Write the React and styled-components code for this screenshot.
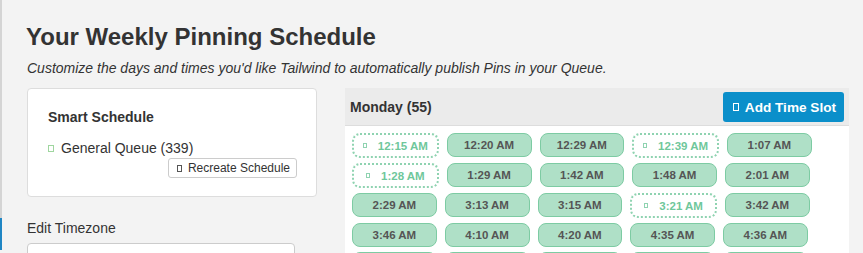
import React from 'react';
import styled, { createGlobalStyle } from 'styled-components';

const slots = [
  { time: '12:15 AM', pending: true },
  { time: '12:20 AM' },
  { time: '12:29 AM' },
  { time: '12:39 AM', pending: true },
  { time: '1:07 AM' },
  { time: '1:28 AM', pending: true },
  { time: '1:29 AM' },
  { time: '1:42 AM' },
  { time: '1:48 AM' },
  { time: '2:01 AM' },
  { time: '2:29 AM' },
  { time: '3:13 AM' },
  { time: '3:15 AM' },
  { time: '3:21 AM', pending: true },
  { time: '3:42 AM' },
  { time: '3:46 AM' },
  { time: '4:10 AM' },
  { time: '4:20 AM' },
  { time: '4:35 AM' },
  { time: '4:36 AM' },
  { time: '5:02 AM' },
  { time: '5:14 AM' },
  { time: '5:30 AM' },
  { time: '5:41 AM' },
  { time: '6:05 AM' },
];

function App() {
  return (
    <>
      <GlobalStyle />
      <StyledPage>
        <StyledEdge>
          <span />
          <span className='active' />
        </StyledEdge>
        <StyledMain>
          <StyledTitle>Your Weekly Pinning Schedule</StyledTitle>
          <StyledSubtitle>
            Customize the days and times you'd like Tailwind to automatically publish Pins in your Queue.
          </StyledSubtitle>
          <StyledColumns>
            <StyledSidebar>
              <StyledCard>
                <h3>Smart Schedule</h3>
                <StyledQueue>
                  <StyledGlyph $w={6} $h={7} $color='#9fd69f' $gap={7} />
                  General Queue (339)
                </StyledQueue>
                <StyledActions>
                  <StyledSmallButton>
                    <StyledGlyph $w={5} $h={7} $color='#555' $gap={6} />
                    Recreate Schedule
                  </StyledSmallButton>
                </StyledActions>
              </StyledCard>
              <StyledLabel>Edit Timezone</StyledLabel>
              <StyledInput />
            </StyledSidebar>
            <StyledPanel>
              <StyledPanelHeader>
                <h4>Monday (55)</h4>
                <StyledAddButton>
                  <StyledGlyph $w={6} $h={8} $color='#fff' $gap={6} />
                  Add Time Slot
                </StyledAddButton>
              </StyledPanelHeader>
              <StyledSlots>
                {slots.map((slot) => (
                  <StyledSlot key={slot.time} $pending={slot.pending}>
                    {slot.pending && <StyledGlyph $w={4} $h={5} $color='#8fd3b1' $gap={11} />}
                    {slot.time}
                  </StyledSlot>
                ))}
              </StyledSlots>
            </StyledPanel>
          </StyledColumns>
        </StyledMain>
      </StyledPage>
    </>
  );
}

const GlobalStyle = createGlobalStyle`
  body {
    margin: 0;
    background: #f3f3f3;
    font-family: "Liberation Sans", Arial, sans-serif;
    color: #333;
  }
`;

const StyledPage = styled.div`
  display: flex;
  height: 253px;
  overflow: hidden;
`;

const StyledEdge = styled.div`
  width: 2px;
  display: flex;
  flex-direction: column;
  span {
    height: 218px;
    background: #d4d4d4;
  }
  .active {
    height: 32px;
    background: #1f86c4;
  }
`;

const StyledMain = styled.div`
  flex: 1;
  padding-left: 25px;
`;

const StyledTitle = styled.h1`
  margin: 23px 0 0 -1px;
  font-size: 24px;
  line-height: 28px;
  font-weight: bold;
  color: #333;
`;

const StyledSubtitle = styled.p`
  margin: 7px 0 0 0;
  font-size: 14px;
  line-height: 20px;
  font-style: italic;
`;

const StyledColumns = styled.div`
  display: flex;
  gap: 28px;
  margin-top: 10px;
  align-items: flex-start;
`;

const StyledSidebar = styled.div`
  width: 290px;
`;

const StyledCard = styled.div`
  background: #fff;
  border: 1px solid #ddd;
  border-radius: 4px;
  padding: 20px 19px 18px 20px;
  h3 {
    margin: 0;
    font-size: 14px;
    line-height: 17px;
  }
`;

const StyledQueue = styled.div`
  margin-top: 12px;
  font-size: 14px;
  line-height: 20px;
  display: flex;
  align-items: center;
`;

const StyledGlyph = styled.span`
  display: inline-block;
  flex: none;
  box-sizing: border-box;
  width: ${(p) => p.$w}px;
  height: ${(p) => p.$h}px;
  border: 1px solid ${(p) => p.$color};
  margin-right: ${(p) => p.$gap}px;
`;

const StyledActions = styled.div`
  display: flex;
  justify-content: flex-end;
`;

const StyledSmallButton = styled.button`
  display: flex;
  align-items: center;
  box-sizing: border-box;
  height: 20px;
  padding: 0 6px 0 8px;
  background: #fff;
  border: 1px solid #ccc;
  border-radius: 3px;
  font-family: inherit;
  font-size: 12px;
  color: #333;
`;

const StyledLabel = styled.div`
  margin-top: 21px;
  font-size: 14px;
  line-height: 20px;
`;

const StyledInput = styled.div`
  margin-top: 5px;
  width: 268px;
  height: 34px;
  box-sizing: border-box;
  background: #fff;
  border: 1px solid #ccc;
  border-radius: 4px;
`;

const StyledPanel = styled.div`
  width: 504px;
  background: #fff;
`;

const StyledPanelHeader = styled.div`
  display: flex;
  justify-content: space-between;
  align-items: center;
  background: #ebebeb;
  border-bottom: 1px solid #ddd;
  padding: 4px 5px 3px 5px;
  h4 {
    margin: 0;
    font-size: 14px;
    font-weight: bold;
    color: #333;
  }
`;

const StyledAddButton = styled.button`
  display: flex;
  align-items: center;
  height: 30px;
  padding: 0 8px 0 10px;
  background: #0b8fca;
  border: none;
  border-radius: 3px;
  color: #fff;
  font-family: inherit;
  font-size: 13.6px;
  font-weight: bold;
`;

const StyledSlots = styled.div`
  display: flex;
  flex-wrap: wrap;
  align-items: flex-start;
  column-gap: 8px;
  row-gap: 5px;
  padding: 7px 7px;
`;

const StyledSlot = styled.div`
  box-sizing: border-box;
  display: flex;
  align-items: center;
  justify-content: center;
  width: ${(p) => (p.$pending ? '86.75px' : '84.75px')};
  height: ${(p) => (p.$pending ? '25px' : '24px')};
  border-radius: 8px;
  border: ${(p) => (p.$pending ? '2px dotted #8fd3b1' : '1px solid #7dcba3')};
  background: ${(p) => (p.$pending ? '#fff' : '#afe0c7')};
  color: ${(p) => (p.$pending ? '#6fc79b' : '#555')};
  font-size: 11.5px;
  font-weight: bold;
`;

export default App;
